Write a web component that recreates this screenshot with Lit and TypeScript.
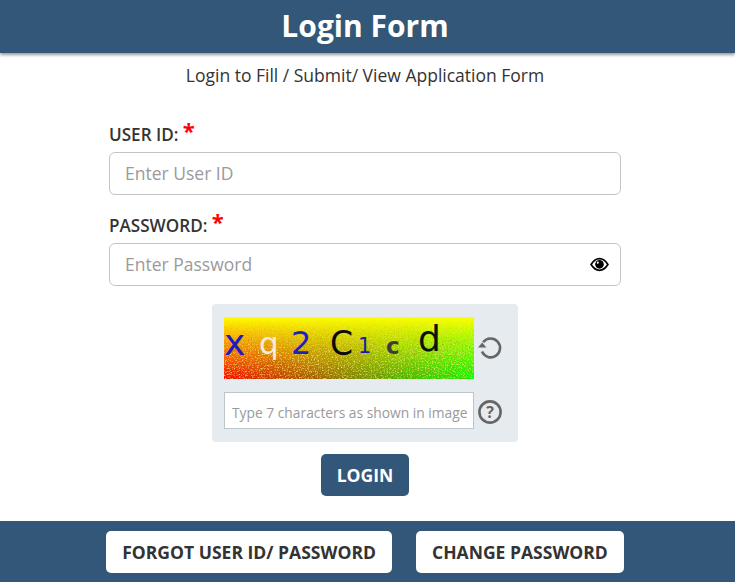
import { LitElement, html, css, svg } from 'lit';
import { customElement } from 'lit/decorators.js';

// captcha letters, placed on the noisy canvas
const CAPTCHA = [
  { ch: 'x', x: 0, y: 2, size: 36, color: '#1a1ac8', weight: 400 },
  { ch: 'q', x: 35, y: 5, size: 31, color: '#f4ece0', weight: 400 },
  { ch: '2', x: 67, y: 4, size: 32, color: '#1a22c0', weight: 400 },
  { ch: 'C', x: 106, y: 4, size: 33, color: '#0a0a08', weight: 400 },
  { ch: '1', x: 134, y: 13, size: 21, color: '#1a1ab0', weight: 400 },
  { ch: 'c', x: 162, y: 12, size: 23, color: '#3c4030', weight: 700 },
  { ch: 'd', x: 194, y: -2, size: 36, color: '#0a140a', weight: 400 },
];

@customElement('app-root')
export class AppRoot extends LitElement {
  static styles = css`
    :host {
      display: block;
      font-family: 'Open Sans', sans-serif;
      color: #333;
      background: #fff;
      height: 582px;
      overflow: hidden;
    }
    * {
      box-sizing: border-box;
    }

    /* Header */
    .header {
      height: 53px;
      padding-right: 5px;
      background: #325779;
      color: #fff;
      font-size: 30px;
      font-weight: 700;
      line-height: 51px;
      text-align: center;
      box-shadow: 0 2px 3px rgba(0, 0, 0, 0.4);
    }
    .content {
      width: 730px;
    }
    .subtitle {
      margin: 10px 0 0;
      font-size: 17.5px;
      line-height: 24px;
      text-align: center;
    }

    /* Form */
    .form {
      width: 512px;
      margin: 0 auto;
      padding-top: 34px;
    }
    .label {
      display: block;
      height: 31px;
      font-size: 17.1px;
      font-weight: 600;
      line-height: 18px;
    }
    .req {
      color: #f00;
      font-size: 22px;
      font-weight: 700;
      line-height: 18px;
      vertical-align: 2px;
    }
    .field {
      position: relative;
      margin-bottom: 17px;
    }
    .field input {
      display: block;
      width: 100%;
      height: 43px;
      padding: 0 15px 2px;
      border: 1px solid #c4c4c4;
      border-radius: 6px;
      font: 400 17.5px 'Open Sans', sans-serif;
      color: #333;
      outline: none;
    }
    input::placeholder {
      color: #9a9a9a;
      opacity: 1;
    }
    .eye {
      position: absolute;
      right: 12px;
      top: 14px;
      width: 19px;
      height: 15px;
      display: block;
    }

    /* Captcha */
    .captcha {
      width: 306px;
      height: 138px;
      margin: 18px auto 0;
      padding: 13px 12px;
      background: #e5ebef;
      border-radius: 4px;
      display: grid;
      grid-template-columns: 250px 28px;
      grid-template-rows: 62px 37px;
      row-gap: 13px;
      column-gap: 2px;
      align-items: center;
    }
    .canvas {
      position: relative;
      width: 250px;
      height: 62px;
      overflow: hidden;
      background:
        linear-gradient(to bottom, #ff0 0%, rgba(255, 255, 0, 0) 100%),
        linear-gradient(to right, #f00 0%, #0f0 100%);
    }
    .noise {
      position: absolute;
      inset: 0;
      width: 100%;
      height: 100%;
    }
    .glyph {
      position: absolute;
      font-family: 'DejaVu Sans', sans-serif;
      line-height: 1;
    }
    .captcha input {
      width: 250px;
      height: 37px;
      padding: 3px 0 0 7px;
      border: 1px solid #bcc5ca;
      background: #fff;
      font: 400 13.8px 'Open Sans', sans-serif;
      outline: none;
    }
    .tool {
      width: 26px;
      height: 26px;
      display: block;
      margin-left: 1px;
    }
    .tool--refresh {
      margin-bottom: 2px;
    }
    .tool--help {
      margin-top: 3px;
    }

    /* Buttons */
    .actions {
      display: flex;
      justify-content: center;
      margin-top: 12px;
    }
    .btn {
      height: 42px;
      padding: 0 16px;
      border: 0;
      border-radius: 5px;
      font: 700 17.55px 'Open Sans', sans-serif;
      white-space: nowrap;
    }
    .btn--primary {
      background: #325779;
      color: #fff;
    }
    .btn--light {
      background: #fff;
      color: #333;
    }
    .footer {
      height: 61px;
      margin-top: 25px;
      padding: 10px 5px 0 0;
      background: #325779;
      display: flex;
      justify-content: center;
      gap: 24px;
    }
  `;

  _renderEye() {
    return html`<svg class="eye" viewBox="0 0 20 16">
      <path d="M1 8C4 3.4 7 1.8 10 1.8S16 3.4 19 8C16 12.6 13 14.2 10 14.2S4 12.6 1 8Z" fill="#fff" stroke="#000" stroke-width="1.8"/>
      <circle cx="10" cy="7.8" r="4.6" fill="#000"/>
      <circle cx="8.2" cy="6" r="1.1" fill="#fff"/>
    </svg>`;
  }

  _renderRefresh() {
    return html`<svg class="tool tool--refresh" viewBox="0 0 26 26" fill="none" stroke="#666" stroke-width="2.6">
      <path d="M6.2 8.2A9.4 9.4 0 1 1 5 17.6"/>
      <path d="M1 13.4H9.4L5.2 8.6Z" fill="#666" stroke="none"/>
    </svg>`;
  }

  _renderHelp() {
    return html`<svg class="tool tool--help" viewBox="0 0 26 26">
      <circle cx="13" cy="13" r="10.6" fill="none" stroke="#666" stroke-width="2.6"/>
      ${svg`<text x="13" y="18.6" text-anchor="middle" font-family="Open Sans" font-size="16" font-weight="700" fill="#666">?</text>`}
    </svg>`;
  }

  render() {
    return html`
      <div class="header">Login Form</div>
      <div class="content">
        <p class="subtitle">Login to Fill / Submit/ View Application Form</p>

        <div class="form">
          <label class="label">USER ID: <span class="req">*</span></label>
          <div class="field">
            <input type="text" placeholder="Enter User ID" />
          </div>
          <label class="label">PASSWORD: <span class="req">*</span></label>
          <div class="field">
            <input type="password" placeholder="Enter Password" />
            ${this._renderEye()}
          </div>
        </div>

        <div class="captcha">
          <div class="canvas">
            <svg class="noise" viewBox="0 0 250 62">
              <filter id="grain" x="0" y="0" width="100%" height="100%">
                <feTurbulence type="fractalNoise" baseFrequency="0.7" numOctaves="2" seed="4"/>
                <feColorMatrix values="0 0 0 0 0.4  0 0 0 0 0.25  0 0 0 0 0  2.4 0 0 0 -1.25"/>
              </filter>
              <filter id="glint" x="0" y="0" width="100%" height="100%">
                <feTurbulence type="fractalNoise" baseFrequency="0.7" numOctaves="2" seed="11"/>
                <feColorMatrix values="0 0 0 0 0.95  0 0 0 0 0.85  0 0 0 0 0.2  2.4 0 0 0 -1.15"/>
              </filter>
              <linearGradient id="fade" x1="0" y1="0" x2="0" y2="1">
                <stop offset="0" stop-color="#fff" stop-opacity="0"/>
                <stop offset="0.6" stop-color="#fff" stop-opacity="1"/>
              </linearGradient>
              <mask id="fade-mask"><rect width="250" height="62" fill="url(#fade)"/></mask>
              <rect width="250" height="62" filter="url(#grain)" mask="url(#fade-mask)"/>
              <rect width="250" height="62" filter="url(#glint)" mask="url(#fade-mask)"/>
            </svg>
            ${CAPTCHA.map(g => html`<span class="glyph" style="left:${g.x}px;top:${g.y + 6}px;font-size:${g.size}px;color:${g.color};font-weight:${g.weight}">${g.ch}</span>`)}
          </div>
          ${this._renderRefresh()}
          <input type="text" placeholder="Type 7 characters as shown in image" />
          ${this._renderHelp()}
        </div>

        <div class="actions">
          <button class="btn btn--primary">LOGIN</button>
        </div>
      </div>

      <div class="footer">
        <button class="btn btn--light">FORGOT USER ID/ PASSWORD</button>
        <button class="btn btn--light">CHANGE PASSWORD</button>
      </div>
    `;
  }
}
